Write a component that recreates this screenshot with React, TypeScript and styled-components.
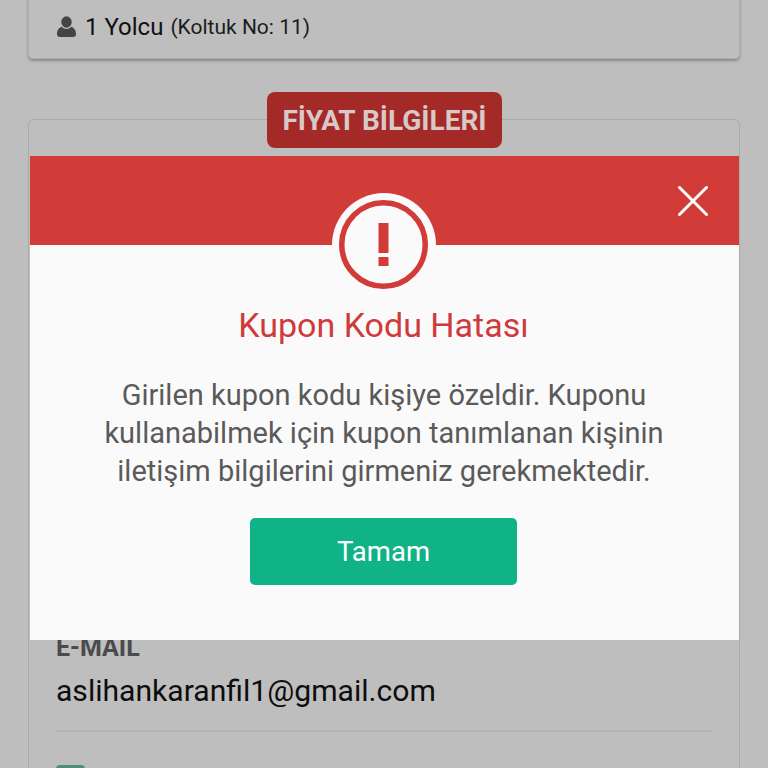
import React from "react";
import styled, { createGlobalStyle } from "styled-components";

const Global = createGlobalStyle`
  html, body { margin: 0; padding: 0; background: #bebebe; }
  body { font-family: Roboto, "Noto Sans", sans-serif; }
`;

const Page = styled.div`
  position: relative;
  width: 768px;
  height: 768px;
  overflow: hidden;
  background: #bebebe;
`;

const Content = styled.div`
  display: flex;
  flex-direction: column;
  padding: 0 28px;
  margin-top: -20px;
`;

const PassengerCard = styled.section`
  display: flex;
  align-items: center;
  height: 79px;
  padding: 14px 28px 0;
  box-sizing: border-box;
  border: 1px solid #adadad;
  border-radius: 5px;
  box-shadow: 0 2px 3px rgba(0, 0, 0, 0.28);
`;

const UserIcon = styled.svg`
  flex: none;
  margin-right: 9px;
`;

const PassengerCount = styled.span`
  font-size: 24px;
  color: #111;
  margin-right: 7px;
`;

const Seat = styled.small`
  font-size: 21px;
  color: #1c1c1c;
`;

const PriceCard = styled.section`
  position: relative;
  margin-top: 60px;
  height: 700px;
  padding: 514px 27px 0;
  border: 1px solid #a9a9a9;
  border-radius: 6px;
`;

const PriceBadge = styled.h2`
  position: absolute;
  top: -28px;
  left: 238px;
  margin: 0;
  width: 235px;
  height: 56px;
  display: flex;
  align-items: center;
  justify-content: center;
  background: #a42a28;
  border-radius: 8px;
  color: #d8c8c7;
  font-size: 28px;
  font-weight: 700;
`;

const FieldLabel = styled.div`
  font-size: 25px;
  font-weight: 700;
  color: #4b4b4b;
  line-height: 28px;
`;

const FieldValue = styled.div`
  font-size: 30.1px;
  color: #0d0d0d;
  line-height: 36px;
  margin-top: 11px;
  padding-bottom: 21px;
  border-bottom: 2px solid #b5b5b5;
`;

const Consent = styled.div`
  width: 29px;
  height: 20px;
  margin-top: 33px;
  background: #4f8f78;
  border-radius: 4px;
`;

const Modal = styled.div`
  position: absolute;
  top: 156px;
  left: 30px;
  width: 709px;
  height: 484px;
  display: flex;
  flex-direction: column;
  align-items: center;
  background: #fafafa;
`;

const ModalHeader = styled.header`
  position: relative;
  align-self: stretch;
  height: 89px;
  background: #d13b38;
`;

const CloseButton = styled.button`
  position: absolute;
  top: 30px;
  right: 31px;
  width: 30px;
  height: 30px;
  padding: 0;
  border: 0;
  background: none;
  display: block;
`;

const AlertHalo = styled.div`
  position: absolute;
  left: 302px;
  top: 37px;
  width: 104px;
  height: 104px;
  border-radius: 50%;
  background: #fafafa;
  display: flex;
  align-items: center;
  justify-content: center;
`;

const Title = styled.h1`
  margin: 60px 2px 0 0;
  font-size: 34px;
  line-height: 40px;
  font-weight: 400;
  color: #cf3b3d;
`;

const Message = styled.p`
  margin: 31px 1px 0 0;
  width: 590px;
  text-align: center;
  font-size: 29px;
  line-height: 38px;
  color: #5a5a5a;
`;

const OkButton = styled.button`
  margin: 28px 2px 0 0;
  width: 267px;
  height: 67px;
  border: 0;
  border-radius: 5px;
  background: #0fb387;
  color: #fff;
  font-family: inherit;
  font-size: 27.5px;
`;

export default function App() {
  return (
    <Page>
      <Global />
      <Content>
        <PassengerCard>
          <UserIcon width="19" height="21" viewBox="0 0 19 21">
            <ellipse cx="9.5" cy="6" rx="5.2" ry="5.8" fill="#444" />
            <path d="M0 18 C0 13.5 2.5 11.5 5 10.8 C6 12.2 7.6 13 9.5 13 C11.4 13 13 12.2 14 10.8 C16.5 11.5 19 13.5 19 18 C19 20 18 21 16 21 L3 21 C1 21 0 20 0 18 Z" fill="#444" />
          </UserIcon>
          <PassengerCount>1 Yolcu</PassengerCount>
          <Seat>(Koltuk No: 11)</Seat>
        </PassengerCard>
        <PriceCard>
          <PriceBadge>FİYAT BİLGİLERİ</PriceBadge>
          <FieldLabel>E-MAIL</FieldLabel>
          <FieldValue>aslihankaranfil1@gmail.com</FieldValue>
          <Consent />
        </PriceCard>
      </Content>
      <Modal>
        <ModalHeader>
          <CloseButton aria-label="Kapat">
            <svg width="30" height="30" viewBox="0 0 30 30">
              <path d="M1.5 1.5 L28.5 28.5 M28.5 1.5 L1.5 28.5" stroke="#fff" strokeWidth="3" strokeLinecap="round" />
            </svg>
          </CloseButton>
          <AlertHalo>
            <svg width="90" height="90" viewBox="0 0 90 90">
              <circle cx="44.5" cy="44.5" r="41.75" fill="none" stroke="#d13b38" strokeWidth="5.5" />
              <rect x="39.5" y="23" width="10" height="30" fill="#d13b38" />
              <rect x="39.5" y="57" width="10" height="9" fill="#d13b38" />
            </svg>
          </AlertHalo>
        </ModalHeader>
        <Title>Kupon Kodu Hatası</Title>
        <Message>
          Girilen kupon kodu kişiye özeldir. Kuponu kullanabilmek için kupon tanımlanan kişinin iletişim bilgilerini girmeniz gerekmektedir.
        </Message>
        <OkButton>Tamam</OkButton>
      </Modal>
    </Page>
  );
}
